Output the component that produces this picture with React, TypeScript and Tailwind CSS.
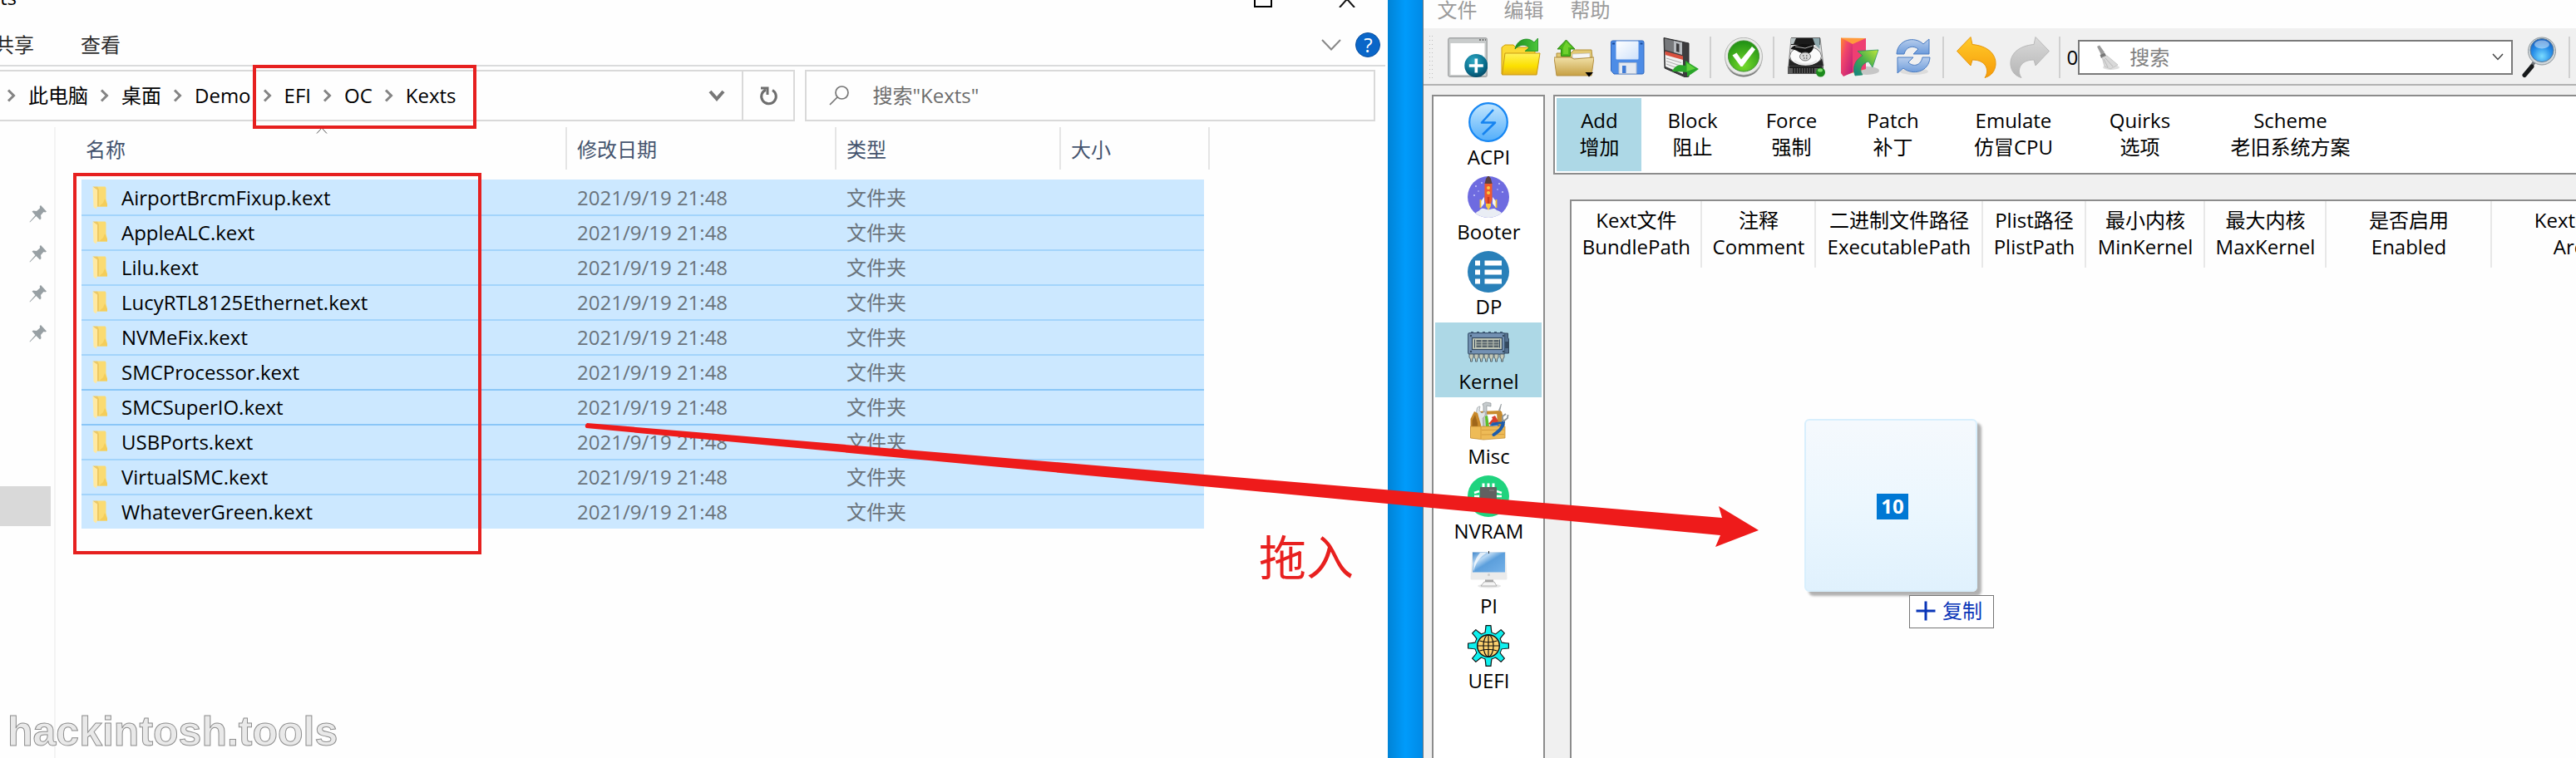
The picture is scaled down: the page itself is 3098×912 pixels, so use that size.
import React from "react";

const FONT = "font-['Open_Sans','Noto_Sans_CJK_SC',sans-serif]";

function Chevron() {
  return (
    <svg viewBox="0 0 12 16" className="h-4 w-3 shrink-0" fill="none" stroke="#848484" strokeWidth="3">
      <path d="M2 1.5 8.5 8 2 14.5" />
    </svg>
  );
}

function Pin() {
  return (
    <svg viewBox="0 0 22 22" className="h-[22px] w-[22px]" fill="#98a0a4">
      <path d="M14 1 21 8.500 19.500 9.500 17.500 9 14 13 14.500 17 13 18.500 8.500 14 1 21.500 0.500 21 7.500 13 3.500 8.500 5 7.500 9 8 13 4.500 12.800 2Z" />
    </svg>
  );
}

function Folder() {
  return (
    <svg viewBox="0 0 18 28" className="h-7 w-[18px] shrink-0">
      <path d="M6 .5H15.500L16.500 2V15L18 22V24.500H6Z" fill="#fadb72" />
      <path d="M15 15 18 22V24.500H8L13 20Z" fill="#f4cd5a" />
      <path d="M.5 .5H6L8 4V24.500H5.500V5Z" fill="#edc965" />
      <path d="M.5 .8 6 4.500V24L4.500 27.500 1.500 25Z" fill="#ffe9a2" />
    </svg>
  );
}

/* ---------- toolbar icons ---------- */

const ic = "h-12 w-12 shrink-0";

function NewIcon() {
  return (
    <svg viewBox="0 0 48 48" className={ic}>
      <defs>
        <radialGradient id="nw" cx=".4" cy=".3" r=".8"><stop offset="0" stopColor="#2fa9c4" /><stop offset=".6" stopColor="#0a6f8e" /><stop offset="1" stopColor="#03405c" /></radialGradient>
      </defs>
      <rect x=".8" y=".8" width="46.400" height="46.400" rx="2" fill="#c9cccc" stroke="#a3a5a6" strokeWidth="1.400" />
      <rect x="3.500" y="7" width="41" height="38" fill="#fff" />
      <path d="M38 3h2M41.500 3h2M45 3h1" stroke="#555" strokeWidth="1.300" />
      <circle cx="34.300" cy="34" r="14" fill="url(#nw)" />
      <path d="M34.300 25.500v17M25.800 34h17" stroke="#fff" strokeWidth="3.600" />
    </svg>
  );
}

function OpenIcon() {
  return (
    <svg viewBox="0 0 48 48" className={ic}>
      <defs>
        <linearGradient id="op" x2="0" y2="1"><stop offset="0" stopColor="#fff25a" /><stop offset=".6" stopColor="#fbe000" /><stop offset="1" stopColor="#e9b51c" /></linearGradient>
        <linearGradient id="og" x2="1"><stop offset="0" stopColor="#1b8f20" /><stop offset="1" stopColor="#4cc63c" /></linearGradient>
      </defs>
      <path d="M1 12 5 9H15L18 12H39L41 15V44H1Z" fill="#fbd934" stroke="#cf9f0a" />
      <path d="M5 19H47L43 45H1.500Z" fill="url(#op)" stroke="#c99a10" />
      <path d="M17 14C19 3 32-2 40 6L44.500 1V16.500H29L34 12.500C30 8 23 8 17 14Z" fill="url(#og)" stroke="#178a1c" strokeWidth=".8" />
    </svg>
  );
}

function ExportIcon() {
  return (
    <svg viewBox="0 0 48 48" className={ic}>
      <defs>
        <linearGradient id="ex" x2="0" y2="1"><stop offset="0" stopColor="#f0e0a6" /><stop offset="1" stopColor="#c7a043" /></linearGradient>
      </defs>
      <path d="M3 24V19H20L24 15H45L46 24Z" fill="#e2c873" stroke="#b2923c" />
      <path d="M22 20 43 19V25H22Z" fill="#f6f6f6" stroke="#bbb" strokeWidth=".6" />
      <path d="M0 24H20L24 26 48 24 45 46H3Z" fill="url(#ex)" stroke="#b49043" />
      <path d="M14.500 3 25 14H19.500V22.500H8.500V14H4Z" fill="#4cb81a" stroke="#2b8610" />
      <path d="M14.500 5 21 12H17V20H11V12Z" fill="#7fdc35" opacity=".7" />
      <path d="M37.500 42H47L42 47.500Z" fill="#000" />
    </svg>
  );
}

function SaveIcon() {
  return (
    <svg viewBox="0 0 48 48" className={ic}>
      <defs>
        <linearGradient id="sv" x2="1" y2="1"><stop offset="0" stopColor="#fff" /><stop offset="1" stopColor="#cfe2fb" /></linearGradient>
      </defs>
      <path d="M4.500 6Q4.500 4 6.500 4H42Q44 4 44 6V42Q44 44 42 44H8L4.500 40Z" fill="#4d8ce6" stroke="#2e66be" />
      <rect x="10.500" y="4.500" width="27" height="22" rx="1" fill="url(#sv)" />
      <path d="M6 7.500h3M39.500 7.500h3" stroke="#1d4b97" strokeWidth="2" />
      <path d="M14 30.500H35V43.500H14Z" fill="#e4e9f1" stroke="#aebbd0" />
      <rect x="18" y="34" width="4.500" height="9" fill="#3f7bd6" />
    </svg>
  );
}

function SaveAsIcon() {
  return (
    <svg viewBox="0 0 48 48" className={ic}>
      <path d="M4 .5 34 7V47L30 48 5 37Z" fill="#3c3c3e" stroke="#2b2b2c" />
      <path d="M5 1.500 16 4V18L5.500 15Z" fill="#77797c" />
      <path d="M16 4 26 6V21L16 18Z" fill="#b6babe" />
      <path d="M19 7l3.500 1v10l-3.500-1Z" fill="#3b3b3d" />
      <path d="M5.500 18 27 24V44L6 35Z" fill="#f2f2f2" />
      <path d="M5.500 16.500 27 22.500V27L5.500 21Z" fill="#d8503f" />
      <path d="M7 25l18 5.500M7 28.500l18 6M7 32l16 6" stroke="#aaa" />
      <path d="M14 41C17 34 22 32 30 34V28L46 38 32 47.500V42C25 41 19 41 14 41Z" fill="#2aa52a" />
      <path d="M31.500 30.500 42 37.500 31.500 41Z" fill="#5fd03c" />
    </svg>
  );
}

function CheckIcon() {
  return (
    <svg viewBox="0 0 48 48" className={ic}>
      <defs>
        <radialGradient id="ck" cx=".5" cy=".8" r=".8"><stop offset="0" stopColor="#76da2c" /><stop offset="1" stopColor="#1d8f13" /></radialGradient>
        <linearGradient id="cr" x2="0" y2="1"><stop offset="0" stopColor="#f7f7f7" /><stop offset="1" stopColor="#6f716f" /></linearGradient>
      </defs>
      <circle cx="24" cy="25" r="22.500" fill="url(#cr)" />
      <circle cx="24" cy="22.800" r="22.500" fill="#e9eae8" stroke="#b5b6b4" />
      <circle cx="24" cy="22.500" r="18.500" fill="url(#ck)" stroke="#3d8f2d" />
      <path d="M10.500 21.500 15.500 18.500 21 26.500 34 11 38 14.500 22.500 35 20.500 35Z" fill="#fff" />
    </svg>
  );
}

function DiskIcon() {
  return (
    <svg viewBox="0 0 48 48" className={ic}>
      <path d="M5 1H40L44 34H2Z" fill="#dcdcdc" stroke="#8a8a8a" />
      <path d="M5 .5H40V9H5Z" fill="#1a1a1a" />
      <path d="M5 1 11 1 8 8H4.500Z" fill="#b9c3c4" />
      <path d="M31 1 39.500 1V14L34 9Z" fill="#8fa9ae" />
      <ellipse cx="22.500" cy="22.500" rx="19" ry="12" fill="#fbfbfb" stroke="#777" />
      <path d="M4.500 14C8 8 14 10 18 8L32 9C33 15 28 20 23 20 16 20 13 15 4.500 14Z" fill="#111" />
      <path d="M10 11 22 13 31 10" fill="none" stroke="#aaa" />
      <path d="M3 25C8 36 37 36 42 25L44 34.500H2Z" fill="#242424" />
      <path d="M9 28C15 34 30 34 36 28" fill="none" stroke="#e8e8e8" strokeWidth="2.500" />
      <ellipse cx="22" cy="23" rx="6.500" ry="5" fill="#d9d9d9" stroke="#777" />
      <path d="M19 22h1.500M23 22h1.500M20 25h1.500M23 25h1.500" stroke="#666" strokeWidth="1.300" />
      <path d="M1 34.500H44V44H1Z" fill="#5a5a5a" />
      <path d="M3 34.500H42V37H3Z" fill="#1d1d1d" />
      <path d="M8 37v6M11 37v6M14 37v6M17 37v6M20 37v6M23 37v6M26 37v6M29 37v6M32 37v6" stroke="#151515" strokeWidth="1.500" />
      <circle cx="40.500" cy="42" r="5.500" fill="#1d8a1d" />
      <ellipse cx="40" cy="39.500" rx="3" ry="2" fill="#7ddc6b" />
    </svg>
  );
}

function PinkFolderIcon() {
  return (
    <svg viewBox="0 0 48 48" className={ic}>
      <defs>
        <linearGradient id="pk" x2="1" y2="1"><stop offset="0" stopColor="#ff8a2a" /><stop offset=".35" stopColor="#f2466b" /><stop offset="1" stopColor="#b8187b" /></linearGradient>
        <linearGradient id="pg" x1="0" y1="1" x2="1" y2="0"><stop offset="0" stopColor="#0f7f86" /><stop offset=".5" stopColor="#47ae4a" /><stop offset="1" stopColor="#c2e83a" /></linearGradient>
      </defs>
      <ellipse cx="32" cy="40" rx="15" ry="5" fill="#c6c6c6" />
      <path d="M1 .5 31 1V38L4 46 1 42Z" fill="#ff9a3c" />
      <path d="M1 .5 15 8V42L4 47 1 43Z" fill="url(#pk)" />
      <path d="M15 8 31 1V38L15 42Z" fill="#ee3f72" />
      <path d="M18 46C14 36 18 27 27 22L21 16.500 46 15 39 36 34 29C26 32 22 38 27 45Z" fill="url(#pg)" stroke="#1e8a66" strokeWidth=".7" />
    </svg>
  );
}

function SyncIcon() {
  return (
    <svg viewBox="0 0 48 48" className={ic}>
      <defs>
        <linearGradient id="sy" x2="0" y2="1"><stop offset="0" stopColor="#b7cdec" /><stop offset="1" stopColor="#6c9bdb" /></linearGradient>
      </defs>
      <ellipse cx="25" cy="41" rx="17" ry="4" fill="#dcdcdc" />
      <path d="M4 20C5 2 26-2 36 8L43 2V20H24L30 14C24 9 15 11 13 20Z" fill="url(#sy)" stroke="#4a7cc2" />
      <path d="M44 24C43 42 23 46 12 37L5 43V24H24L18 30C24 36 33 34 35 24Z" fill="url(#sy)" stroke="#4a7cc2" />
    </svg>
  );
}

function UndoIcon({ redo = false }: { redo?: boolean }) {
  return (
    <svg viewBox="0 0 48 50" className="h-[50px] w-12 shrink-0">
      <defs>
        <linearGradient id="un" x2="0" y2="1"><stop offset="0" stopColor="#ffcb2a" /><stop offset="1" stopColor="#f79a08" /></linearGradient>
        <linearGradient id="re" x2="0" y2="1"><stop offset="0" stopColor="#dadada" /><stop offset="1" stopColor="#b5b5b5" /></linearGradient>
      </defs>
      <path
        d={redo ? "M47.500 17.500 31 .5 29 9.500C12 11 0 20 1 34 2 42 6 47 14 49.500 8 41 12 28 29 28L31 35Z" : "M.5 17.500 17 .5 19 9.500C36 11 48 20 47 34 46 42 42 47 34 49.500 40 41 36 28 19 28L17 35Z"}
        fill={redo ? "url(#re)" : "url(#un)"}
        stroke={redo ? "#b9b9b9" : "#e6960b"}
      />
    </svg>
  );
}

function Broom() {
  return (
    <svg viewBox="0 0 28 30" className="h-[30px] w-7 shrink-0">
      <ellipse cx="18" cy="27" rx="10" ry="3" fill="#dedede" />
      <path d="M1 2 4 .5 10 9 6 12Z" fill="#9a9a9a" />
      <path d="M4.500 12 10 9.500 12 13 6 16Z" fill="#777" />
      <path d="M7 15 13 13 26 24 17 29 10 26Z" fill="#d9d9d9" stroke="#b6b6b6" strokeWidth=".6" />
      <path d="M9 17 14 27M11 16 20 26" stroke="#b0b0b0" strokeWidth=".8" />
    </svg>
  );
}

function Magnifier() {
  return (
    <svg viewBox="0 0 48 50" className="h-[50px] w-12 shrink-0">
      <defs>
        <radialGradient id="mg" cx=".5" cy=".75" r=".7"><stop offset="0" stopColor="#7bdcff" /><stop offset=".6" stopColor="#268de8" /><stop offset="1" stopColor="#1663c4" /></radialGradient>
      </defs>
      <path d="M19 29 7 46" stroke="#6f7479" strokeWidth="4" />
      <path d="M15 36 6 46.500" stroke="#17191b" strokeWidth="5" strokeLinecap="round" />
      <circle cx="27" cy="17.500" r="16.500" fill="#cfd6da" stroke="#8e969b" />
      <circle cx="27" cy="16.500" r="14" fill="url(#mg)" stroke="#5d7b96" />
      <ellipse cx="27" cy="9.500" rx="9" ry="5" fill="#fff" opacity=".45" />
    </svg>
  );
}

/* ---------- section icons ---------- */

const sc = "h-[50px] w-[50px] shrink-0";

function AcpiIcon() {
  return (
    <svg viewBox="0 0 50 50" className={sc}>
      <defs><linearGradient id="ac" x2="0" y2="1"><stop offset="0" stopColor="#c3e6fd" /><stop offset="1" stopColor="#52aefb" /></linearGradient></defs>
      <circle cx="25" cy="25" r="22.800" fill="url(#ac)" stroke="#1787f3" strokeWidth="2.200" />
      <path d="M31 10 17 25.500H33L18 40" fill="none" stroke="#1583f0" strokeWidth="2.600" strokeLinejoin="round" />
    </svg>
  );
}

function BooterIcon() {
  return (
    <svg viewBox="0 0 50 50" className={sc}>
      <defs><clipPath id="bc"><circle cx="25" cy="25" r="25" /></clipPath></defs>
      <g clipPath="url(#bc)">
        <rect width="50" height="50" fill="#6e6be0" />
        <g fill="#cfd0fa"><circle cx="10" cy="12" r="1" /><circle cx="17" cy="8" r=".9" /><circle cx="38" cy="9" r="1" /><circle cx="42" cy="19" r="1" /><circle cx="8" cy="23" r="1" /><circle cx="13" cy="18" r=".8" /><circle cx="36" cy="16" r=".8" /></g>
        <path d="M16 30 20 25V33L16 38ZM34 30 30 25V33L34 38Z" fill="#f3f3f8" />
        <path d="M15.500 28v10M34.500 28v10" stroke="#f4c132" strokeWidth="1.800" />
        <path d="M8 50C8 42 14 43 15 40 19 37 21 40 25 40 29 40 32 37 35 41 40 42 42 45 43 50Z" fill="#e9edf4" />
        <path d="M22 32h6v4l-3 5-3-5Z" fill="#f7c842" />
        <path d="M20.500 8H29.500V28L28 33H22L20.500 28Z" fill="#f0592d" />
        <path d="M22 3 25-1 28 3 29.500 9H20.500Z" fill="#5a4140" />
        <circle cx="25" cy="14" r="2" fill="#f9c846" /><circle cx="25" cy="20" r="2" fill="#f9c846" /><path d="M25 25v8" stroke="#c63a23" strokeWidth="2.500" />
      </g>
    </svg>
  );
}

function DpIcon() {
  return (
    <svg viewBox="0 0 50 50" className={sc}>
      <circle cx="25" cy="25" r="25" fill="#2980b9" />
      <path d="M9 11.500h6v6H9ZM20.500 11.500H41v6H20.500ZM9 22.500h6v6H9ZM20.500 22.500H41v6H20.500ZM9 33.500h6v6H9ZM20.500 33.500H41v6H20.500Z" fill="#fff" />
    </svg>
  );
}

function KernelIcon() {
  return (
    <svg viewBox="0 0 50 50" className={sc}>
      <path d="M4 7h3v3H4ZM11 7h3v3h-3ZM18 7h3v3h-3ZM25 7h3v3h-3ZM32 7h3v3h-3ZM39 7h3v3h-3Z" fill="#3e5974" />
      <path d="M42 9h6.500v5l1 2v17H42Z" fill="#54708e" stroke="#34495e" />
      <path d="M45 19h4v8h-4Z" fill="#34495e" />
      <rect x=".6" y="8.600" width="44" height="25.500" rx="2" fill="#7391b3" stroke="#3e5974" strokeWidth="1.200" />
      <rect x="5.500" y="14.500" width="36" height="14" fill="#c3c9b8" stroke="#34495e" strokeWidth="1.200" />
      <path d="M8.500 16.500v10M38.500 16.500v10" stroke="#34495e" />
      <g fill="#56636a"><path d="M10.500 17h6v9h-6ZM17.500 17h6v9h-6ZM24.500 17h6v9h-6ZM31.500 17h6v9h-6Z" /></g>
      <path d="M10 20h28M10 23h28" stroke="#b4bbb0" strokeWidth="1" />
      <g fill="#34495e"><circle cx="4" cy="12" r="1.200" /><circle cx="43" cy="12" r="1.200" /><circle cx="4" cy="31" r="1.200" /><circle cx="43" cy="31" r="1.200" /></g>
      <path d="M2 34h5v4l-1.500 2v3h-2v-3L2 38ZM8 34h5v4l-1.500 2v3h-2v-3L8 38ZM14 34h5v4l-1.500 2v3h-2v-3L14 38ZM20 34h5v4l-1.500 2v3h-2v-3L20 38ZM26 34h5v4l-1.500 2v3h-2v-3L26 38ZM32 34h5v4l-1.500 2v3h-2v-3L32 38ZM39 34h5v4l-1.500 2v3h-2v-3L39 38Z" fill="#c3c9b8" stroke="#4a5a66" strokeWidth=".9" />
    </svg>
  );
}

function MiscIcon() {
  return (
    <svg viewBox="0 0 50 50" className={sc}>
      <path d="M11 13 40 12V16L14 17Z" fill="#c98c2c" />
      <path d="M35 13 41 13 45 30 36 32Z" fill="#c68a2e" />
      <path d="M37 12 40 4 41 4 39 13Z" fill="#9aa0a3" />
      <path d="M18 4 22 2 28 3V7L23 6V32H19V7Z" fill="#c6cbcd" stroke="#7d8488" strokeWidth=".6" />
      <path d="M11 11C11 8 13 7 15 7L14 12 17 15 21 13C22 18 20 20 18 21L19 32H14L13 21C11 19 10 15 11 11Z" fill="#e0e4e6" stroke="#868d90" strokeWidth=".6" />
      <path d="M21 19 24 18 26 31H22Z" fill="#5cc02a" />
      <path d="M25 28 30 22 29 20 33 18 37 25 30 30Z" fill="#d8402b" />
      <path d="M26 31 30 26 36 27 38 30Z" fill="#2b6fc0" />
      <path d="M3.500 22 8 13 12 15 16 29V46L3.500 45Z" fill="#c98a2b" />
      <path d="M5.500 24 9 17 12 27V34L5.500 33Z" fill="#9f671b" />
      <path d="M3.500 31H45V45L19 47 3.500 45Z" fill="#eebb57" stroke="#c08829" strokeWidth=".7" />
      <path d="M16 31V46M17 35.500 44 35M17 41 44 40.500" stroke="#cf9638" strokeWidth=".8" />
      <path d="M43 25C43 33 37 37 31.500 41" fill="none" stroke="#1c5cac" strokeWidth="4" strokeLinecap="round" />
      <path d="M41 27C37 26 34 27 30 29" fill="none" stroke="#1c5cac" strokeWidth="2.500" strokeLinecap="round" />
      <path d="M42 25 42 19 46 16M43 25 48 21 48.500 17" fill="none" stroke="#8f979b" strokeWidth="1.800" />
    </svg>
  );
}

function NvramIcon() {
  return (
    <svg viewBox="0 0 50 50" className={sc}>
      <circle cx="25" cy="25" r="25" fill="#1fd37e" />
      <path d="M19 15V9.500M25 15V9.500M31 15V9.500" stroke="#fff" strokeWidth="3" />
      <path d="M14 19 8 21M14 25H8M14 31 8 30M35 19 41 21M35 25H41M35 31 41 30" stroke="#fff" strokeWidth="2.400" />
      <rect x="15" y="14" width="20" height="23" rx="1" fill="#616161" />
      <path d="M26 18h6" stroke="#888" />
    </svg>
  );
}

function PiIcon() {
  return (
    <svg viewBox="0 0 50 50" className={sc}>
      <defs>
        <linearGradient id="pi" x2="1" y2="1"><stop offset="0" stopColor="#3f86cc" /><stop offset=".3" stopColor="#b9d8f3" /><stop offset=".5" stopColor="#5c9fdc" /><stop offset="1" stopColor="#74b1e8" /></linearGradient>
      </defs>
      <ellipse cx="26" cy="43" rx="14" ry="2.500" fill="#e6e6e6" />
      <path d="M21 35H31V38H21Z" fill="#a9a9a9" />
      <path d="M20 38H32L35 43H16Z" fill="#f4f4f4" stroke="#999" strokeWidth=".7" />
      <path d="M5.500 2H46L47.500 34Q47.500 35.500 46 35.500H5Q3.500 35.500 3.500 34Z" fill="#ebebeb" />
      <rect x="6" y="2.500" width="39" height="24" fill="url(#pi)" />
      <path d="M7 26C10 14 15 8 23 3H15C10 9 7 15 7 26Z" fill="#fff" opacity=".75" />
      <path d="M25.500 1v3" stroke="#333" />
      <circle cx="25.500" cy="29.500" r="1.500" fill="#ccc" />
    </svg>
  );
}

function UefiIcon() {
  return (
    <svg viewBox="0 0 50 50" className={sc}>
      <circle cx="25" cy="25" r="16.800" fill="#111" />
      <g fill="#0ef0ee" stroke="#111" strokeWidth="1.200" strokeLinejoin="round">
        {[0, 45, 90, 135, 180, 225, 270, 315].map((a) => (
          <path key={a} d="M20.500 11Q21.500 8 22 .6H28Q28.500 8 29.500 11Z" transform={`rotate(${a} 25 25)`} />
        ))}
      </g>
      <circle cx="25" cy="25" r="14.500" fill="none" stroke="#0ef0ee" strokeWidth="2.800" />
      <circle cx="25" cy="25" r="13.300" fill="#fbd06e" stroke="#111" strokeWidth="1.400" />
      <g fill="none" stroke="#111" strokeWidth="1.200">
        <path d="M25 12V38M12 25H38M14.500 19Q25 22.500 35.500 19M14.500 31Q25 27.500 35.500 31" />
        <ellipse cx="25" cy="25" rx="6" ry="13" />
      </g>
    </svg>
  );
}

/* ---------- file explorer ---------- */

const crumbs = ["此电脑", "桌面", "Demo", "EFI", "OC", "Kexts"];
const files = [
  "AirportBrcmFixup.kext",
  "AppleALC.kext",
  "Lilu.kext",
  "LucyRTL8125Ethernet.kext",
  "NVMeFix.kext",
  "SMCProcessor.kext",
  "SMCSuperIO.kext",
  "USBPorts.kext",
  "VirtualSMC.kext",
  "WhateverGreen.kext",
];
const focused = 6;

function rowBorder(i: number) {
  if (i === 0) return "border-[#cce8ff]";
  if (i === focused || i === focused + 1) return "border-[#8ac6f7]";
  return "border-[#a3d4fb]";
}

function Explorer() {
  return (
    <section className="flex min-w-0 flex-[1670] flex-col overflow-hidden bg-[#fefefe]">
      <header className="flex h-[30px] items-start justify-between pr-[39px]">
        <span className="-mt-[19px] text-[24px] leading-8 text-black">ts</span>
        <div className="flex gap-20">
          <button aria-label="最大化" className="h-[9px] w-[22px] border-2 border-t-0 border-black" />
          <button aria-label="关闭" className="h-[9px]">
            <svg viewBox="0 0 20 9" className="h-[9px] w-5" fill="none" stroke="#111" strokeWidth="2"><path d="M1 9 10 -1 19 9" /></svg>
          </button>
        </div>
      </header>
      <div className="mr-[3px] flex h-[50px] items-center border-b-2 border-[#dadbdc] pr-[6px] text-[24px] text-[#2b2b2b]">
        <button className="-ml-[7px]">共享</button>
        <button className="ml-14">查看</button>
        <button aria-label="展开功能区" className="ml-auto">
          <svg viewBox="0 0 24 14" className="h-[14px] w-6" fill="none" stroke="#888" strokeWidth="2"><path d="M1 1 12 12.500 23 1" /></svg>
        </button>
        <button aria-label="帮助" className="ml-[17px] flex h-[30px] w-[30px] items-center justify-center rounded-full border border-[#0a4f9e] bg-[#0a66c8] text-[24px] leading-none text-white">?</button>
      </div>
      <div className="mt-1 flex h-[62px] pr-[15px]">
        <nav className="flex min-w-0 flex-1 items-center border-2 border-l-0 border-[#d9d9d9] text-[24px]">
          <ol className="flex items-center pl-2">
            {crumbs.map((c) => (
              <li key={c} className="flex items-center">
                <Chevron />
                <a href="#" className="px-[14px] whitespace-nowrap text-black">{c}</a>
              </li>
            ))}
          </ol>
          <button aria-label="历史记录" className="ml-auto px-5">
            <svg viewBox="0 0 20 14" className="h-[14px] w-5" fill="none" stroke="#777" strokeWidth="4"><path d="M2 2 10 11 18 2" /></svg>
          </button>
          <button aria-label="刷新" className="flex h-full w-[62px] items-center justify-center border-l-2 border-[#d9d9d9]">
            <svg viewBox="0 0 24 24" className="h-6 w-6" fill="none" stroke="#6e6e6e" strokeWidth="3"><path d="M17 5.500A8.800 8.800 0 1 1 9 5" /><path d="M3 3H11V11" /></svg>
          </button>
        </nav>
        <label className="ml-3 flex w-[686px] shrink-0 items-center border-2 border-[#d9d9d9] pl-[27px]">
          <svg viewBox="0 0 24 24" className="h-6 w-6 shrink-0" fill="none" stroke="#777" strokeWidth="1.700"><circle cx="15.500" cy="8.500" r="7.500" /><path d="M10 14 1 23" /></svg>
          <input type="text" aria-label="搜索" placeholder={'搜索"Kexts"'} className="ml-7 min-w-0 flex-1 bg-transparent text-[24px] outline-none placeholder:text-[#6d6d6d]" />
        </label>
      </div>
      <div className="flex flex-1 pt-[7px]">
        <aside className="flex w-[67px] shrink-0 flex-col border-r-2 border-[#f3f3f3]">
          <div className="flex flex-col items-end gap-[26px] pt-[93px] pr-2">
            <Pin /><Pin /><Pin /><Pin />
          </div>
          <div className="mt-[173px] mr-1 h-12 bg-[#d9d9d9]" />
        </aside>
        <div className="relative min-w-0 flex-1 pl-[31px]">
          <svg viewBox="0 0 14 8" className="absolute top-0 left-[313px] h-2 w-[14px]" fill="none" stroke="#555"><path d="M1 7.500 7 1 13 7.500" /></svg>
          <table className="w-[1357px] table-fixed border-separate border-spacing-0 text-left">
            <colgroup>
              <col className="w-[584px]" /><col className="w-[324px]" /><col className="w-[270px]" /><col className="w-[172px]" /><col className="w-[7px]" />
            </colgroup>
            <thead>
              <tr className="h-[63px] align-top text-[24px] text-[#44546e]">
                <th className="p-0 font-normal"><div className="flex h-[51px] items-center border-r-2 border-[#e5e5e5] pt-[2px] pl-[5px]">名称</div></th>
                <th className="p-0 font-normal"><div className="flex h-[51px] items-center border-r-2 border-[#e5e5e5] pt-[2px] pl-3">修改日期</div></th>
                <th className="p-0 font-normal"><div className="flex h-[51px] items-center border-r-2 border-[#e5e5e5] pt-[2px] pl-3">类型</div></th>
                <th colSpan={2} className="p-0 font-normal"><div className="flex h-[51px] items-center border-r-2 border-[#e5e5e5] pt-[2px] pl-3">大小</div></th>
              </tr>
            </thead>
            <tbody className="text-[24px] leading-8 text-[#6a737b]">
              {files.map((f, i) => {
                const td = "h-[42px] border-t-2 bg-[#cce8ff] p-0 " + rowBorder(i);
                return (
                  <tr key={f}>
                    <td className={td}>
                      <div className="flex items-center gap-[17px] pl-[13px] text-black"><Folder />{f}</div>
                    </td>
                    <td className={td + " pl-3"}>2021/9/19 21:48</td>
                    <td className={td + " pl-3"}>文件夹</td>
                    <td className={td} />
                    <td className="p-0" />
                  </tr>
                );
              })}
            </tbody>
          </table>
        </div>
      </div>
    </section>
  );
}

/* ---------- config editor ---------- */

const sections: [string, () => React.JSX.Element][] = [
  ["ACPI", AcpiIcon],
  ["Booter", BooterIcon],
  ["DP", DpIcon],
  ["Kernel", KernelIcon],
  ["Misc", MiscIcon],
  ["NVRAM", NvramIcon],
  ["PI", PiIcon],
  ["UEFI", UefiIcon],
];

const tabs = [
  ["Add", "增加", "w-[102px] bg-[#add8e6]"],
  ["Block", "阻止", "w-[122px]"],
  ["Force", "强制", "w-[116px]"],
  ["Patch", "补丁", "w-[128px]"],
  ["Emulate", "仿冒CPU", "w-[162px]"],
  ["Quirks", "选项", "w-[142px]"],
  ["Scheme", "老旧系统方案", "w-[220px]"],
];

const columns = [
  ["Kext文件", "BundlePath", "w-[157px]"],
  ["注释", "Comment", "w-[137px]"],
  ["二进制文件路径", "ExecutablePath", "w-[201px]"],
  ["Plist路径", "PlistPath", "w-[124px]"],
  ["最小内核", "MinKernel", "w-[143px]"],
  ["最大内核", "MaxKernel", "w-[146px]"],
  ["是否启用", "Enabled", "w-[199px]"],
  ["Kext架构", "Arch", "w-[200px]"],
];

function Tool({ label, children }: { label: string; children: React.ReactNode }) {
  return <button aria-label={label} className="flex w-16 shrink-0 items-center justify-center">{children}</button>;
}

function Sep() {
  return <span className="mr-[7px] ml-[3px] h-[50px] w-[2px] shrink-0 bg-[#d0d0d0]" />;
}

function Editor() {
  return (
    <section className="flex min-w-0 flex-[1386] flex-col overflow-hidden border-l border-[#6b7780] bg-[#f0f0f0]">
      <nav className="flex h-[34px] gap-8 bg-[#fefefe] pl-4 text-[24px] leading-6 text-[#9b9b9b]">
        <button className="h-6">文件</button>
        <button className="h-6">编辑</button>
        <button className="h-6">帮助</button>
      </nav>
      <div className="flex h-[69px] items-center border-b-2 border-[#b2b2b2] pt-[2px] pl-[6px]">
        <span className="mr-[9px] h-[55px] w-[6px] bg-[radial-gradient(circle,#bdbdbd_1px,transparent_1px)] bg-[length:3px_5px]" />
        <Tool label="新建"><NewIcon /></Tool>
        <Tool label="打开"><OpenIcon /></Tool>
        <Tool label="最近"><ExportIcon /></Tool>
        <Tool label="保存"><SaveIcon /></Tool>
        <Tool label="另存为"><SaveAsIcon /></Tool>
        <Sep />
        <Tool label="检查"><CheckIcon /></Tool>
        <Sep />
        <Tool label="挂载"><DiskIcon /></Tool>
        <Tool label="导入"><PinkFolderIcon /></Tool>
        <Tool label="同步"><SyncIcon /></Tool>
        <Sep />
        <Tool label="撤销"><UndoIcon /></Tool>
        <Tool label="重做"><UndoIcon redo /></Tool>
        <Sep />
        <label htmlFor="find" className="text-[24px] text-black">0</label>
        <div className="flex h-[42px] flex-1 items-center border-2 border-[#7a7a7a] bg-white pr-[9px] pl-5">
          <Broom />
          <input id="find" type="text" placeholder="搜索" className="ml-3 min-w-0 flex-1 bg-transparent text-[24px] outline-none placeholder:text-[#808080]" />
          <button aria-label="展开">
            <svg viewBox="0 0 14 9" className="h-[9px] w-[14px]" fill="none" stroke="#444" strokeWidth="1.500"><path d="M1 1 7 7.500 13 1" /></svg>
          </button>
        </div>
        <Tool label="查找"><Magnifier /></Tool>
        <Sep />
      </div>
      <div className="flex flex-1 gap-[10px] pt-[11px] pl-[10px]">
        <nav className="flex w-[136px] shrink-0 flex-col border-2 border-b-0 border-[#8c8c8c] bg-white p-[2px]">
          {sections.map(([name, Icon]) => (
            <button key={name} className={"flex h-[90px] flex-col items-center pt-1 text-[24px] leading-[34px] text-black " + (name === "Kernel" ? "bg-[#add8e6]" : "")}>
              <Icon />
              {name}
            </button>
          ))}
        </nav>
        <div className="flex min-w-0 flex-1 flex-col">
          <nav className="flex h-[96px] border-2 border-r-0 border-[#8c8c8c] bg-white p-[2px] text-[24px] leading-8 text-black">
            {tabs.map(([en, zh, cls]) => (
              <button key={en} className={"flex shrink-0 flex-col items-center justify-center pb-[2px] " + cls}>
                <span>{en}</span>
                <span>{zh}</span>
              </button>
            ))}
          </nav>
          <div className="mt-[30px] ml-5 flex-1 overflow-hidden border-t-2 border-l-2 border-[#8c8c8c] bg-[#fefefe]">
            <table className="w-[1307px] table-fixed border-separate border-spacing-0">
              <thead>
                <tr>
                  {columns.map(([zh, en, w]) => (
                    <th key={en} className={"h-20 border-r-2 border-[#e8e8e8] p-0 pb-[2px] text-center text-[24px] leading-8 font-normal whitespace-nowrap text-black " + w}>
                      {zh}
                      <br />
                      {en}
                    </th>
                  ))}
                </tr>
              </thead>
            </table>
          </div>
        </div>
      </div>
    </section>
  );
}

export default function App() {
  return (
    <main className={"relative flex min-h-screen overflow-hidden " + FONT}>
      <Explorer />
      <div className="w-[42px] shrink-0 bg-linear-to-r from-[#0083d6] via-[#009bfb] to-[#008ae6]" />
      <Editor />

      <div className="absolute top-[78px] left-[304px] h-[77px] w-[269px] border-4 border-[#e6201f]" />
      <div className="absolute top-[208px] left-[88px] h-[459px] w-[491px] border-4 border-[#e6201f]" />
      <svg viewBox="0 0 1414 152" className="absolute top-[508px] left-[702px] h-[152px] w-[1414px]" fill="#ee1b1b">
        <path d="M4 1 998 84 1369 115 1365 101 1413 130 1361 150 1367 136 998 101 3 7Q0 4 4 1Z" />
      </svg>
      <p className="absolute top-[632px] left-[1514px] text-[57px] leading-[76px] text-[#e8201f]">拖入</p>

      <div className="absolute top-[504px] left-[2170px] flex h-[208px] w-[208px] items-center justify-center rounded-md border-2 border-[#d8effd] bg-linear-to-b from-[#f5f9fd] via-[#ecf7fe] to-[#e0f1fd] pt-[2px] pl-1 shadow-[5px_5px_3px_#0000004d]">
        <span className="flex h-[31px] w-[38px] items-center justify-center bg-[#0078d4] text-[24px] font-bold text-white">10</span>
      </div>
      <div className="absolute top-[716px] left-[2296px] flex h-10 w-[102px] items-center gap-2 border border-[#767676] bg-white pb-[2px] pl-[7px] text-[24px] text-[#0a36b8]">
        <svg viewBox="0 0 24 24" className="h-6 w-6" stroke="#0a36b8" strokeWidth="3"><path d="M12 .5v23M.5 12h23" /></svg>
        复制
      </div>

      <p className="absolute top-[850px] left-[9px] font-['Liberation_Sans',sans-serif] text-[50px] leading-[60px] font-bold text-[#e9e9e9] [-webkit-text-stroke:1px_#8e8e8e]">
        hackintosh.tools
      </p>
    </main>
  );
}
